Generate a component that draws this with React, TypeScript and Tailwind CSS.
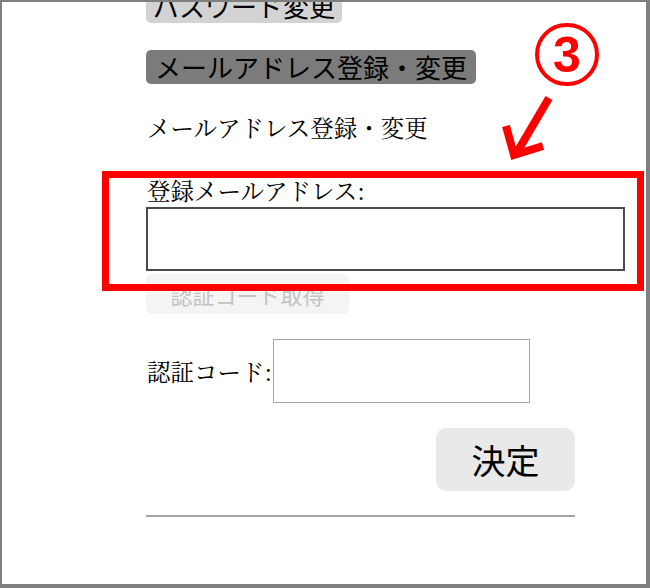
import * as React from 'react';

const SANS = '"Noto Sans CJK JP", "Noto Sans", sans-serif';
const SERIF = '"Noto Serif CJK JP", "Liberation Serif", "Noto Sans CJK JP", serif';

function Annotation(): React.ReactElement {
  return (
    <>
      {/* red highlight box */}
      <div className="pointer-events-none absolute left-[100px] top-[169px] h-[120px] w-[542px] border-[7px] border-[#ff0000]" />
      {/* circled number */}
      <div
        className="absolute left-[533px] top-[21px] flex h-[63px] w-[64px] items-center justify-center rounded-full border-[4px] border-[#ff0000] text-[50px] font-bold leading-none text-[#ff0000]"
        style={{ fontFamily: '"Liberation Sans", Arial, sans-serif' }}
      >
        3
      </div>
      {/* arrow */}
      <svg
        className="absolute left-[493px] top-[88px]"
        width="62"
        height="76"
        viewBox="0 0 62 76"
        fill="none"
        stroke="#ff0000"
        strokeWidth="8"
      >
        <line x1="54" y1="8" x2="21" y2="64" />
        <polyline points="11,36 19,65 48,56" strokeLinejoin="miter" />
      </svg>
    </>
  );
}

export default function App(): React.ReactElement {
  return (
    <div className="relative h-[588px] w-[650px] overflow-hidden border-t-2 border-l-2 border-r-4 border-b-4 border-[#7f7f7f] bg-white">
      <div className="flex flex-col items-start pl-[144px]">
        <button
          type="button"
          className="-mt-[13px] h-[34px] rounded-[5px] bg-[#d3d3d3] px-[7px] text-[26px] leading-[34px] text-black"
          style={{ fontFamily: SANS }}
        >
          パスワード変更
        </button>

        <button
          type="button"
          className="mt-[27px] h-[34px] rounded-[5px] bg-[#7b7b7b] px-[9px] text-[26px] leading-[34px] text-black"
          style={{ fontFamily: SANS }}
        >
          メールアドレス登録・変更
        </button>

        <h2
          className="mt-[27px] pl-px text-[23.5px] font-normal leading-[32px] text-black"
          style={{ fontFamily: SERIF }}
        >
          メールアドレス登録・変更
        </h2>

        <label
          className="mt-[33px] pl-px text-[23.5px] leading-[28px] text-black"
          style={{ fontFamily: SERIF }}
        >
          登録メールアドレス:
        </label>
        <input
          type="email"
          className="mt-[3px] h-[64px] w-[479px] border-2 border-[#4a4a4a] bg-white"
        />

        <button
          type="button"
          disabled
          className="mt-[3px] h-[40px] w-[203px] rounded-[6px] bg-[#f4f4f4] text-[22px] leading-[40px] text-[#c3c3c3]"
          style={{ fontFamily: SANS }}
        >
          認証コード取得
        </button>

        <div className="mt-[25px] flex items-center">
          <span className="pl-px text-[23.5px] leading-[28px] text-black" style={{ fontFamily: SERIF }}>
            認証コード:
          </span>
          <input
            type="text"
            className="ml-px h-[64px] w-[257px] border border-[#a6a6a6] bg-white"
          />
        </div>

        <div className="mt-[25px] flex w-[429px] justify-end">
          <button
            type="button"
            className="h-[63px] w-[139px] rounded-[10px] bg-[#e9e9e9] text-[34px] leading-[63px] text-black"
            style={{ fontFamily: SANS }}
          >
            決定
          </button>
        </div>

        <hr className="mt-[24px] w-[429px] border-t-2 border-[#a3a3a3]" />
      </div>

      <Annotation />
    </div>
  );
}
